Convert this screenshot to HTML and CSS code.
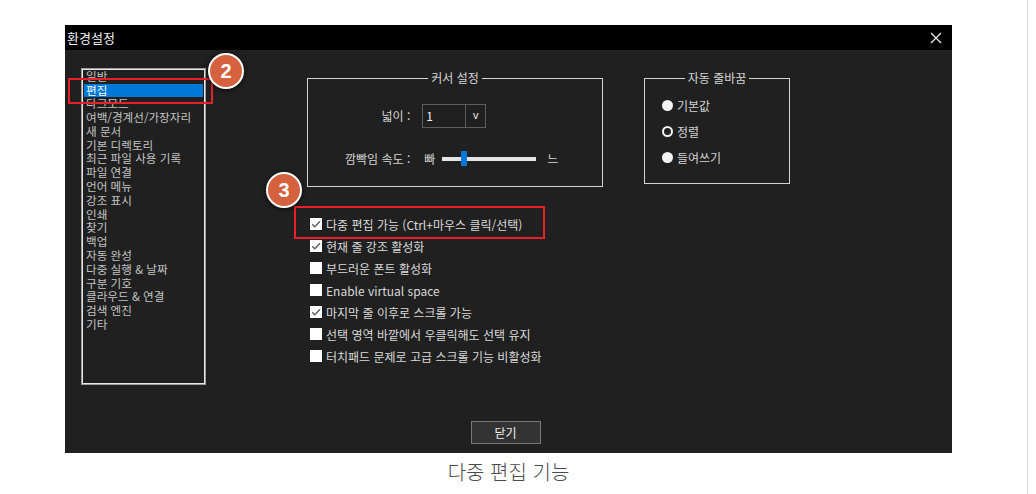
FILE: index.html
```html
<!DOCTYPE html>
<html lang="ko">
<head>
<meta charset="utf-8">
<title>환경설정</title>
<link rel="stylesheet" href="styles.css">
</head>
<body>
<div class="page">
  <div class="content">
    <div class="dialog">
      <div class="titlebar">
        <span class="title">환경설정</span>
        <svg class="close" width="12" height="12" viewBox="0 0 12 12"><path d="M1 1L11 11M11 1L1 11" stroke="#e6e6e6" stroke-width="1.4" fill="none"/></svg>
      </div>
      <div class="dlg-body">
        <div class="main">
          <div class="nav-wrap">
            <div class="nav">
              <ul class="nav-list">
                <li>일반</li>
                <li class="sel">편집</li>
                <li>다크모드</li>
                <li>여백/경계선/가장자리</li>
                <li>새 문서</li>
                <li>기본 디렉토리</li>
                <li>최근 파일 사용 기록</li>
                <li>파일 연결</li>
                <li>언어 메뉴</li>
                <li>강조 표시</li>
                <li>인쇄</li>
                <li>찾기</li>
                <li>백업</li>
                <li>자동 완성</li>
                <li>다중 실행 &amp; 날짜</li>
                <li>구분 기호</li>
                <li>클라우드 &amp; 연결</li>
                <li>검색 엔진</li>
                <li>기타</li>
              </ul>
            </div>
            <div class="hl hl-nav"></div>
            <div class="badge badge-2">2</div>
          </div>
          <div class="settings">
            <div class="groups">
              <div class="group group-cursor">
                <span class="group-title">커서 설정</span>
                <div class="cursor-grid">
                  <span class="lbl">넓이 :</span>
                  <div class="select"><span class="sel-val">1</span><span class="sel-arrow">v</span></div>
                  <span class="lbl">깜빡임 속도 :</span>
                  <div class="slider-row">
                    <span>빠</span>
                    <div class="track"><div class="thumb"></div></div>
                    <span>느</span>
                  </div>
                </div>
              </div>
              <div class="group group-wrap">
                <span class="group-title">자동 줄바꿈</span>
                <div class="radios">
                  <div class="radio-row"><span class="radio"></span>기본값</div>
                  <div class="radio-row"><span class="radio ring"></span>정렬</div>
                  <div class="radio-row"><span class="radio"></span>들여쓰기</div>
                </div>
              </div>
            </div>
            <div class="checks">
              <div class="check-row"><span class="box"><svg width="12" height="12" viewBox="0 0 12 12"><path d="M2.2 6.2L4.8 8.8L10 3.2" stroke="#5a5a5a" stroke-width="1.3" fill="none"/></svg></span>다중 편집 가능 (Ctrl+마우스 클릭/선택)</div>
              <div class="check-row"><span class="box"><svg width="12" height="12" viewBox="0 0 12 12"><path d="M2.2 6.2L4.8 8.8L10 3.2" stroke="#5a5a5a" stroke-width="1.3" fill="none"/></svg></span>현재 줄 강조 활성화</div>
              <div class="check-row"><span class="box"></span>부드러운 폰트 활성화</div>
              <div class="check-row"><span class="box"></span>Enable virtual space</div>
              <div class="check-row"><span class="box"><svg width="12" height="12" viewBox="0 0 12 12"><path d="M2.2 6.2L4.8 8.8L10 3.2" stroke="#5a5a5a" stroke-width="1.3" fill="none"/></svg></span>마지막 줄 이후로 스크롤 가능</div>
              <div class="check-row"><span class="box"></span>선택 영역 바깥에서 우클릭해도 선택 유지</div>
              <div class="check-row"><span class="box"></span>터치패드 문제로 고급 스크롤 기능 비활성화</div>
              <div class="hl hl-check"></div>
              <div class="badge badge-3">3</div>
            </div>
          </div>
        </div>
        <div class="footer"><button class="btn">닫기</button></div>
      </div>
    </div>
    <p class="caption">다중 편집 기능</p>
  </div>
  <div class="rail"></div>
</div>
</body>
</html>
```
FILE: styles.css
```css
* { box-sizing: border-box; }
html, body { margin: 0; padding: 0; background: #fff; }
body { font-family: "Noto Sans CJK KR", sans-serif; }

.page { display: flex; width: 1036px; height: 494px; overflow: hidden; }
.content { width: 1027px; }
.rail { width: 1px; height: 494px; background: #d6d6d6; }

.dialog {
  margin: 25px 0 0 65px;
  width: 887px;
  height: 428px;
  background: #202020;
  color: #d4d4d4;
  font-size: 12px;
}

.titlebar {
  height: 25px;
  background: #000;
  display: flex;
  align-items: center;
  justify-content: space-between;
  padding: 0 10px 0 2px;
}
.title { color: #f2f2f2; font-size: 13px; line-height: 16px; }
.close { display: block; }

.dlg-body { padding: 18px 0 0 16px; }
.main { display: flex; height: 317px; }

.nav-wrap { position: relative; width: 125px; height: 317px; }
.nav {
  width: 125px;
  height: 317px;
  border: 1px solid #9c9c9c;
  box-shadow: inset 0 0 0 1px #e8e8e8;
  padding: 2px;
  overflow: hidden;
  background: #202020;
}
.nav-list { list-style: none; margin: -1.3px 0 0; padding: 0; }
.nav-list li {
  height: 13.8px;
  line-height: 13.8px;
  padding-left: 2px;
  color: #c4c4c4;
  white-space: nowrap;
  font-size: 11.6px;
}
.nav-list li.sel { background: #0078d7; color: #fff; }

.hl { position: absolute; border: 2px solid #e8202a; pointer-events: none; }
.hl-nav { left: -13px; top: 10px; width: 145px; height: 26px; }

.badge {
  position: absolute;
  width: 36px;
  height: 36px;
  border-radius: 50%;
  background: #d5613e;
  border: 2.5px solid #fff;
  box-shadow: 0 1px 5px rgba(0,0,0,.7);
  color: #fff;
  font-family: "Liberation Sans", sans-serif;
  font-weight: bold;
  font-size: 20px;
  display: flex;
  align-items: center;
  justify-content: center;
}
.badge-2 { left: 127px; top: -15px; }
.badge-3 { left: -41px; top: -41px; }

.settings { margin-left: 101px; }
.groups { display: flex; gap: 41px; margin-top: 10px; align-items: flex-start; }
.group { border: 1px solid #d4d4d4; }
.group-title {
  display: block;
  width: max-content;
  margin: -8px auto 0;
  padding: 0 3px;
  background: #202020;
  line-height: 14px;
  color: #d6d6d6;
}
.group-cursor { width: 296px; height: 109px; }
.group-wrap { width: 146px; height: 106px; }

.cursor-grid {
  display: grid;
  grid-template-columns: auto auto;
  justify-content: start;
  column-gap: 12px;
  row-gap: 23px;
  align-items: center;
  margin-top: 19px;
  padding-left: 37px;
}
.lbl { justify-self: end; line-height: 14px; white-space: nowrap; }
.select {
  width: 64px;
  height: 24px;
  border: 1px solid #5c5c5c;
  display: flex;
  color: #f0f0f0;
}
.sel-val { width: 43px; border-right: 1px solid #5c5c5c; padding: 4px 0 0 3px; line-height: 14px; }
.sel-arrow { flex: 1; text-align: center; line-height: 20px; font-family: "Liberation Sans", sans-serif; font-size: 11px; }

.slider-row { display: flex; align-items: center; height: 16px; padding-left: 2px; line-height: 14px; }
.track { position: relative; width: 94px; height: 4px; background: #e4e4e4; margin: 0 11px 0 7px; }
.thumb { position: absolute; left: 19px; top: -6px; width: 6px; height: 15px; background: #0078d7; }

.radios { margin-top: 7px; padding-left: 17px; }
.radio-row { display: flex; align-items: center; height: 26px; gap: 4px; }
.radio { width: 11px; height: 11px; border-radius: 50%; background: #f4f4f4; }
.radio.ring { background: #202020; border: 2px solid #f4f4f4; }

.checks { position: relative; margin-top: 26px; padding-left: 3px; }
.check-row { display: flex; align-items: center; height: 22px; gap: 4px; color: #dadada; white-space: nowrap; }
.box { width: 12px; height: 12px; background: #fff; display: block; flex: none; }
.box svg { display: block; }
.hl-check { left: -13px; top: -7px; width: 251px; height: 33px; }

.footer { display: flex; justify-content: center; margin-top: 36px; padding-right: 22px; }
.btn {
  width: 70px;
  height: 23px;
  background: #333;
  border: 1px solid #787878;
  color: #f0f0f0;
  font-family: "Noto Sans CJK KR", sans-serif;
  font-size: 12px;
  line-height: 14px;
  padding: 0;
}

.caption {
  margin: 7px 0 0 65px;
  width: 887px;
  text-align: center;
  font-size: 20px;
  line-height: 24px;
  color: #4a4a4a;
  font-weight: 300;
}
```
